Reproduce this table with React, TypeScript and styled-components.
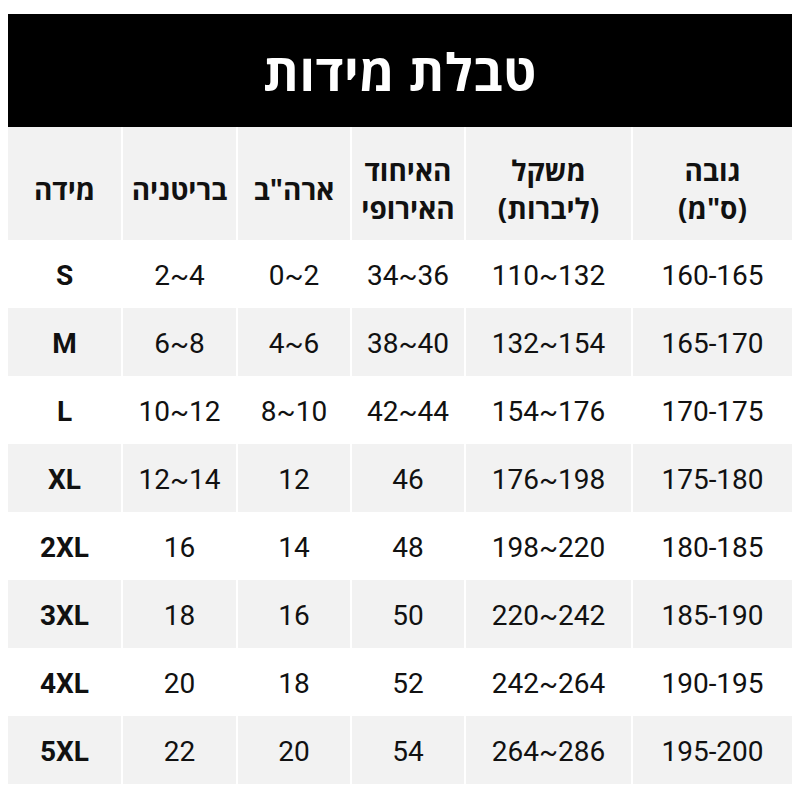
import React from 'react'
import styled, { createGlobalStyle } from 'styled-components'

const GlobalStyle = createGlobalStyle`
  html, body {
    margin: 0;
    padding: 0;
    background: #fff;
  }
`

const Page = styled.div`
  padding: 14px 8px 0;
  font-family: 'Open Sans', 'Liberation Sans', 'DejaVu Sans', sans-serif;
  color: #111;
`

const Title = styled.h1`
  margin: 0;
  height: 113px;
  background: #000;
  color: #fff;
  display: flex;
  align-items: center;
  justify-content: center;
  font-size: 51px;
  font-weight: 700;
  direction: rtl;
  letter-spacing: 0.5px;
`

const Row = styled.div<{ $shaded?: boolean; $height: number }>`
  direction: rtl;
  display: grid;
  grid-template-columns: 159px 165px 112px 112px 113px 113px;
  column-gap: 2px;
  height: ${(p) => p.$height}px;
  background: #fff;
  > div {
    background: ${(p) => (p.$shaded ? '#f2f2f2' : '#fff')};
  }
`

const HeadCell = styled.div`
  display: flex;
  align-items: center;
  justify-content: center;
  text-align: center;
  padding-top: 10px;
  font-size: 28px;
  font-weight: 700;
  line-height: 38px;
`

const Cell = styled.div<{ $bold?: boolean }>`
  display: flex;
  align-items: center;
  justify-content: center;
  padding-top: 3px;
  direction: ltr;
  font-family: Roboto, 'Liberation Sans', sans-serif;
  font-size: 28px;
  font-weight: ${(p) => (p.$bold ? 700 : 400)};
`

const headers = [
  ['גובה', '(ס"מ)'],
  ['משקל', '(ליברות)'],
  ['האיחוד', 'האירופי'],
  ['ארה"ב'],
  ['בריטניה'],
  ['מידה'],
]

const rows = [
  ['160-165', '110~132', '34~36', '0~2', '2~4', 'S'],
  ['165-170', '132~154', '38~40', '4~6', '6~8', 'M'],
  ['170-175', '154~176', '42~44', '8~10', '10~12', 'L'],
  ['175-180', '176~198', '46', '12', '12~14', 'XL'],
  ['180-185', '198~220', '48', '14', '16', '2XL'],
  ['185-190', '220~242', '50', '16', '18', '3XL'],
  ['190-195', '242~264', '52', '18', '20', '4XL'],
  ['195-200', '264~286', '54', '20', '22', '5XL'],
]

export default function App() {
  return (
    <>
      <GlobalStyle />
      <Page>
        <Title>טבלת מידות</Title>
        <Row $shaded $height={113}>
          {headers.map((h, i) => (
            <HeadCell key={i}>
              <span>
                {h.map((line, j) => (
                  <React.Fragment key={j}>
                    {j > 0 && <br />}
                    {line}
                  </React.Fragment>
                ))}
              </span>
            </HeadCell>
          ))}
        </Row>
        {rows.map((r, i) => (
          <Row key={i} $shaded={i % 2 === 1} $height={68}>
            {r.map((v, j) => (
              <Cell key={j} $bold={j === 5}>
                {v}
              </Cell>
            ))}
          </Row>
        ))}
      </Page>
    </>
  )
}
